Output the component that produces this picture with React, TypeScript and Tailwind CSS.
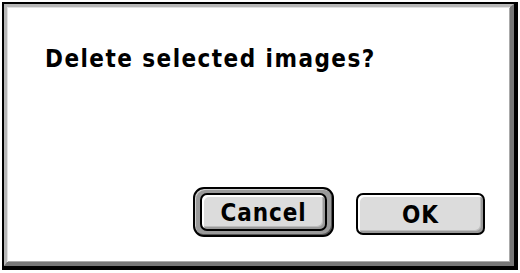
export default function App() {
  return (
    <div className="w-[520px] h-[273px] bg-white overflow-hidden">
      <div className="ml-[2px] mt-[2px] w-[516px] h-[268px] bg-black pl-[2px] pt-[2px] pr-[4px] pb-[4px]">
        <div className="w-full h-full bg-white border-t-[3px] border-l-[3px] border-t-[#b8b8b8] border-l-[#b8b8b8] border-r-[4px] border-b-[4px] border-r-[#777] border-b-[#777] shadow-[inset_1px_1px_0_#e2e2e2,inset_-1px_-1px_0_#aaa] flex flex-col">
          <p
            className="pl-[38px] pt-[38px] text-[24px] leading-[28px] font-bold text-black tracking-[1.45px]"
            style={{ fontFamily: '"DejaVu Sans Condensed", "DejaVu Sans", sans-serif' }}
          >
            Delete selected images?
          </p>
          <div className="mt-auto mb-[25px] flex items-end justify-end gap-[22px] pr-[25px]">
            <DefaultButton label="Cancel" />
            <MacButton label="OK" className="w-[129px] h-[42px] mb-[2px]" />
          </div>
        </div>
      </div>
    </div>
  );
}

function DefaultButton({ label }: { label: string }) {
  return (
    <div className="rounded-[11px] border-2 border-black bg-[#9a9a9a] px-[5px] py-[4px] shadow-[inset_1px_1px_0_#d0d0d0,inset_-1px_-1px_0_#555]">
      <MacButton label={label} className="w-[127px] h-[38px]" />
    </div>
  );
}

function MacButton({ label, className }: { label: string; className: string }) {
  return (
    <button
      className={`${className} rounded-[7px] border-2 border-black bg-[#dcdcdc] shadow-[inset_2px_2px_0_#ffffff,inset_-2px_-2px_0_#9a9a9a,inset_-3px_-3px_0_#bcbcbc] flex items-center justify-center pt-[2px] text-[24px] leading-none font-bold text-black tracking-[0.9px]`}
      style={{ fontFamily: '"DejaVu Sans Condensed", "DejaVu Sans", sans-serif' }}
    >
      {label}
    </button>
  );
}
